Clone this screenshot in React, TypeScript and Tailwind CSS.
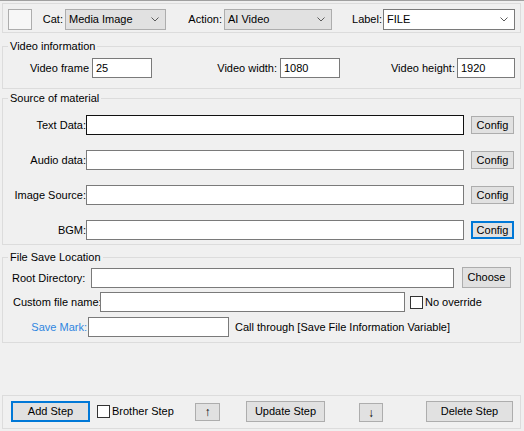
import type { ReactNode } from 'react'

// WinForms-like step editor panel

function Chevron() {
  return (
    <svg width="8" height="5" viewBox="0 0 8 5" className="shrink-0">
      <path d="M0.5 0.5 L4 4 L7.5 0.5" fill="none" stroke="#5a5a5a" strokeWidth="1" />
    </svg>
  )
}

function Combo({ value, className, flat }: { value: string; className: string; flat?: boolean }) {
  return (
    <div
      className={`flex h-[21px] shrink-0 items-center justify-between border pl-[3px] pr-[6px] ${
        flat ? 'border-[#7a7a7a] bg-white' : 'border-[#adadad] bg-[#e1e1e1]'
      } ${className}`}
    >
      <span>{value}</span>
      <Chevron />
    </div>
  )
}

function TextBox({ value, className, focused }: { value?: string; className: string; focused?: boolean }) {
  return (
    <div
      className={`h-[20px] shrink-0 border bg-white pl-[3px] leading-[18px] ${
        focused ? 'border-[#111111]' : 'border-[#7a7a7a]'
      } ${className}`}
    >
      {value}
    </div>
  )
}

function Btn({ children, className, active }: { children: ReactNode; className: string; active?: boolean }) {
  return (
    <button
      type="button"
      className={`flex shrink-0 items-center justify-center bg-[#e1e1e1] text-black ${
        active ? 'border-2 border-[#0078d7]' : 'border border-[#adadad]'
      } ${className}`}
    >
      {children}
    </button>
  )
}

function CheckBox() {
  return <div className="h-[13px] w-[13px] shrink-0 border border-[#333333] bg-white" />
}

function Group({ title, className, children }: { title: string; className: string; children: ReactNode }) {
  return (
    <fieldset className={`ml-[2px] w-[519px] border border-[#dcdcdc] ${className}`}>
      <legend className="ml-[5px] px-[2px] leading-[13px]">{title}</legend>
      {children}
    </fieldset>
  )
}

const sources = [
  { label: 'Text Data:', focused: true },
  { label: 'Audio data:' },
  { label: 'Image Source:' },
  { label: 'BGM:', active: true },
]

export default function App() {
  return (
    <div className="flex h-[431px] w-[524px] flex-col overflow-hidden whitespace-nowrap bg-[#f0f0f0] font-['Liberation_Sans',Arial,sans-serif] text-[11px] text-black">
      <div className="h-px bg-[#a0a0a0]" />

      {/* Category bar */}
      <div className="ml-[2px] mt-[2px] flex h-[30px] w-[519px] items-start border border-[#dcdcdc] pl-[5px] pt-[5px]">
        <div className="h-[21px] w-[24px] shrink-0 border border-[#adadad] bg-[#f7f7f7]" />
        <span className="flex h-[21px] w-[33px] shrink-0 items-center justify-end pr-[2px]">Cat:</span>
        <Combo value="Media Image" className="w-[101px]" />
        <span className="flex h-[21px] w-[58px] shrink-0 items-center justify-end pr-[2px]">Action:</span>
        <Combo value="AI Video" className="w-[108px]" />
        <span className="flex h-[21px] w-[51px] shrink-0 items-center justify-end pr-[1px]">Label:</span>
        <Combo value="FILE" className="w-[132px]" flat />
      </div>

      {/* Video information */}
      <Group title="Video information" className="mt-[7px]">
        <div className="flex items-center pb-[10px] pt-[5px]">
          <span className="w-[86px] shrink-0 text-right">Video frame</span>
          <TextBox value="25" className="ml-[3px] w-[60px]" />
          <span className="w-[125px] shrink-0 text-right">Video width:</span>
          <TextBox value="1080" className="ml-[3px] w-[60px]" />
          <span className="w-[115px] shrink-0 text-right">Video height:</span>
          <TextBox value="1920" className="ml-[2px] w-[58px]" />
        </div>
      </Group>

      {/* Source of material */}
      <Group title="Source of material" className="mt-[3px]">
        <div className="flex flex-col gap-[15px] pb-[4px] pt-[10px]">
          {sources.map((s) => (
            <div key={s.label} className="flex h-[20px] items-center">
              <span className="w-[83px] shrink-0 text-right">{s.label}</span>
              <TextBox className="w-[378px]" focused={s.focused} />
              <Btn className="ml-[7px] h-[18px] w-[43px]" active={s.active}>
                Config
              </Btn>
            </div>
          ))}
        </div>
      </Group>

      {/* File Save Location */}
      <Group title="File Save Location" className="mt-[6px]">
        <div className="flex flex-col pb-[5px] pt-[3px]">
          <div className="flex items-start pl-[9px]">
            <span className="mt-[1px] flex h-[20px] w-[79px] shrink-0 items-center">Root Directory:</span>
            <TextBox className="mt-[1px] w-[363px]" />
            <Btn className="ml-[8px] h-[21px] w-[49px]">Choose</Btn>
          </div>
          <div className="mt-[4px] flex h-[20px] items-center pl-[10px]">
            <span className="w-[87px] shrink-0">Custom file name:</span>
            <TextBox className="w-[305px]" />
            <div className="ml-[5px]">
              <CheckBox />
            </div>
            <span className="ml-[2px]">No override</span>
          </div>
          <div className="mt-[5px] flex h-[20px] items-center">
            <span className="w-[84px] shrink-0 text-right text-[#2f86e0]">Save Mark:</span>
            <TextBox className="ml-[1px] w-[141px]" />
            <span className="ml-[6px]">Call through [Save File Information Variable]</span>
          </div>
        </div>
      </Group>

      {/* Step actions */}
      <div className="mb-[2px] ml-[2px] mt-auto flex h-[34px] w-[519px] items-start border border-[#dcdcdc] pl-[8px] pt-[5px]">
        <Btn className="h-[21px] w-[79px]" active>
          Add Step
        </Btn>
        <div className="ml-[7px] flex h-[21px] w-[98px] shrink-0 items-center">
          <CheckBox />
          <span className="ml-[2px]">Brother Step</span>
        </div>
        <Btn className="mt-[2px] h-[18px] w-[25px] text-[12px]">↑</Btn>
        <Btn className="ml-[26px] h-[21px] w-[79px]">Update Step</Btn>
        <Btn className="ml-[34px] mt-[2px] h-[19px] w-[24px] text-[12px]">↓</Btn>
        <Btn className="ml-[43px] h-[21px] w-[87px]">Delete Step</Btn>
      </div>
    </div>
  )
}
